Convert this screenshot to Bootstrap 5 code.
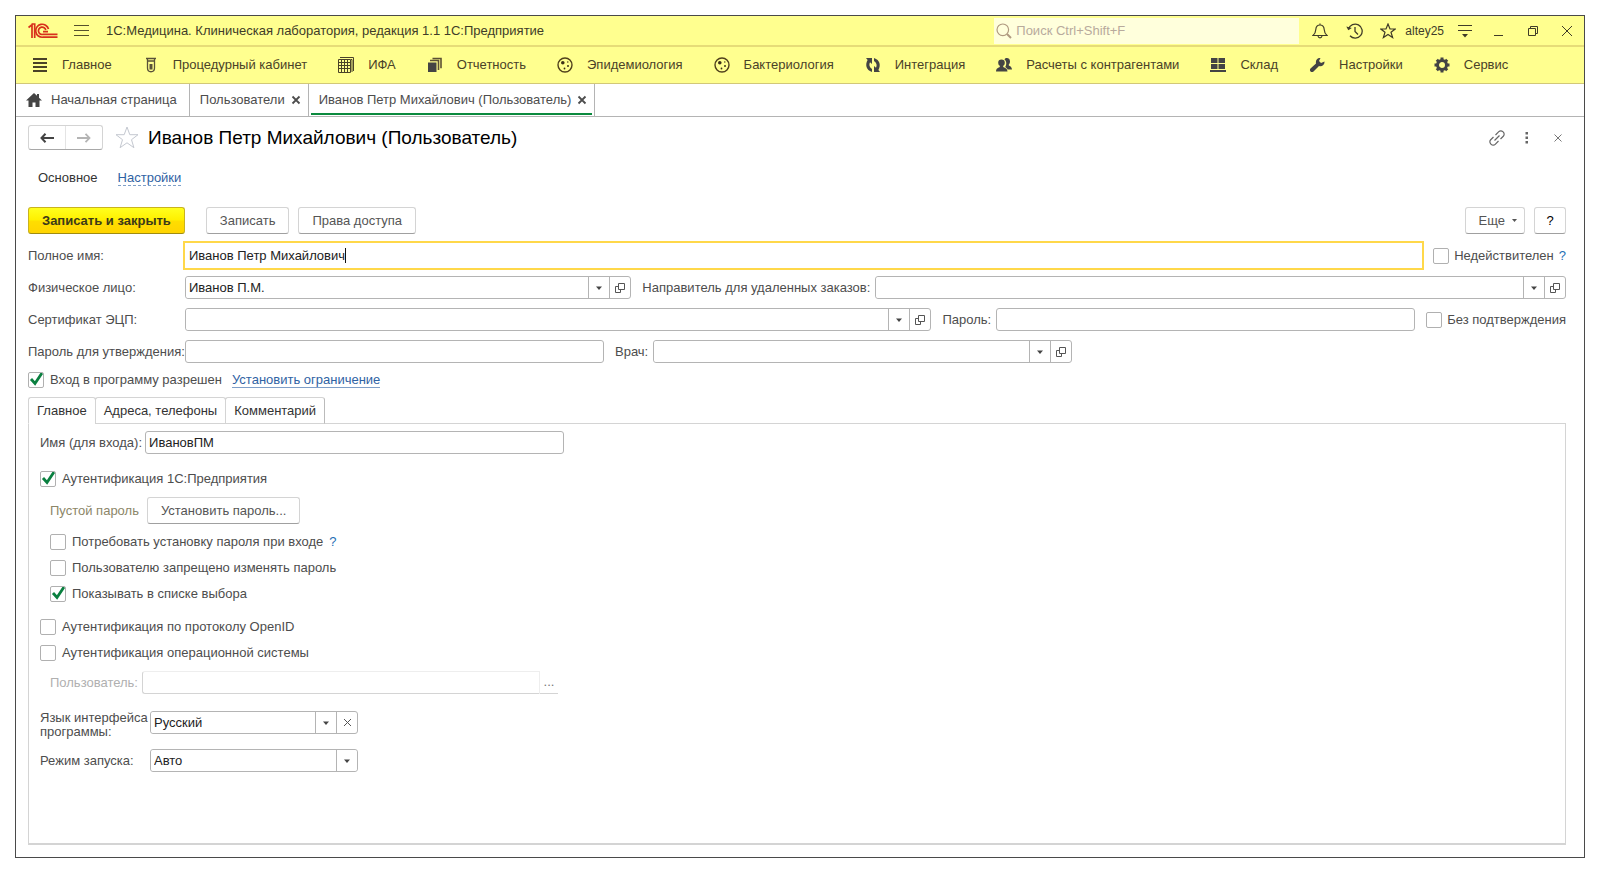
<!DOCTYPE html>
<html lang="ru">
<head>
<meta charset="utf-8">
<meta name="viewport" content="width=device-width, initial-scale=1">
<title>Иванов Петр Михайлович (Пользователь)</title>
<link href="https://cdn.jsdelivr.net/npm/bootstrap@5.3.0/dist/css/bootstrap.min.css" rel="stylesheet">
<style>
  :root { --line: #b4b4b4; --soft: #d4d4d4; --ink: #4d4d4d; --bar: #ffff8f; }
  body { font: 13px/16px "Liberation Sans", Arial, sans-serif; color: var(--ink); background: #fff; padding: 15px; }
  svg { display: block; flex: none; }
  .app-window { min-height: calc(100vh - 30px); border: 1px solid #4a4a4a; }
  .title-bar { height: 31px; background: var(--bar); border-bottom: 2px solid #e6dc78; color: #403c28; padding-left: 12px; }
  .app-name { padding-left: 17px; }
  .user-name { font-size: 12px; }
  .search-box { width: 305px; height: 26px; background: #ffffdc; padding-left: 2px; }
  .search-box input { border: 0; background: none; outline: 0; color: #a89a8c; padding: 0; }
  .search-box input::placeholder { color: #b8aa9c; opacity: 1; }
  .bare { border: 0; background: none; padding: 0; color: inherit; display: flex; align-items: center; justify-content: center; }
  .tool { width: 34px; height: 28px; }
  .section-bar { height: 37px; background: var(--bar); border-bottom: 1px solid #d2c878; padding: 0 16px; gap: 31px; }
  .section-bar a { color: #4a4228; text-decoration: none; gap: 14px; white-space: nowrap; }
  .page-tabs { height: 33px; border-bottom: 1px solid var(--line); }
  .page-tab { position: relative; border-right: 1px solid var(--line); padding: 0 7px 0 10px; gap: 6px; white-space: nowrap; }
  .page-tab.start { gap: 9px; padding-right: 12px; }
  .page-tab a { color: var(--ink); text-decoration: none; }
  .page-tab.current::after { content: ""; position: absolute; left: 2px; right: 2px; bottom: 1px; height: 2px; background: #0b8a3e; }
  .form-page { padding: 8px 18px 12px 12px; }
  .nav-pair { width: 75px; height: 25px; border: 1px solid var(--soft); border-bottom-color: #a8a8a8; border-radius: 3px; }
  .nav-pair button { flex: 1; }
  .nav-pair button + button { border-left: 1px solid #e4e4e4; }
  .page-heading { font-size: 19px; line-height: 24px; color: #000; margin: 0; padding-left: 9px; }
  .more { margin: 0 25px 0 20px; }
  .view-links { padding: 0 10px; height: 18px; margin-top: 19px; gap: 20px; }
  .view-links a { color: #333; text-decoration: none; }
  .view-links a.other, .set-limit { color: #2f62a3; text-decoration: none; border-bottom: 1px dashed #7f9fc8; line-height: 15px; }
  .set-limit { border-bottom-style: solid; }
  .commands { margin: 20px 0 10px; gap: 9px; }
  .cmd { height: 27px; padding: 0 13px; font-size: 13px; line-height: 16px; color: #555; background: #fff; border: 1px solid var(--soft); border-bottom-color: #a0a0a0; border-radius: 3px; white-space: nowrap; }
  .cmd.main { color: #3c3a18; font-weight: bold; margin-right: 12px; border-color: #c9b31e; border-bottom-color: #a08c10; background: linear-gradient(#ffff1e 0, #fff000 48%, #ffde00 52%, #ffd400 100%); }
  .cmd.more-menu { padding-right: 7px; gap: 7px; }
  .cmd.help { width: 32px; padding: 0; color: #000; }
  .field-row { display: flex; align-items: center; height: 23px; margin-bottom: 9px; gap: 11px; }
  .field-row > .pair { display: flex; align-items: center; gap: 5px; }
  .first-label { width: 157px; flex: none; margin-right: -11px; }
  .field-row.tight { gap: 9px; }
  .tight .first-label { margin-right: -9px; }
  label, .hint { white-space: nowrap; }
  .box { height: 23px; width: 419px; border: 1px solid var(--line); border-radius: 3px; padding: 0 3px; font-size: 13px; color: #222; background: #fff; outline: 0; }
  .combo { display: flex; height: 23px; border: 1px solid var(--line); border-radius: 3px; min-width: 0; }
  .combo select { appearance: none; border: 0; outline: 0; flex: 1; min-width: 0; padding: 0 24px 0 3px; font-size: 13px; color: #222; border-radius: 3px;
    background: url("data:image/svg+xml,%3Csvg xmlns='http://www.w3.org/2000/svg' width='21' height='21'%3E%3Cpath d='M.5 0v21' stroke='%23b4b4b4'/%3E%3Cpath d='M8 9.500h6l-3 3.500z' fill='%23444'/%3E%3C/svg%3E") right center no-repeat #fff; }
  .combo button { width: 21px; border-left: 1px solid var(--line); flex: none; }
  .grow-person { flex: 445 1 0; }
  .grow-sender { flex: 925 1 0; }
  .combo.wide { width: 419px; }
  .combo.short { width: 208px; }
  .focus-field { position: relative; flex: 1; height: 29px; margin-left: -2px; }
  .focus-field input { width: 100%; height: 100%; border: 2px solid #ffd84a; border-radius: 0; padding-left: 4px; }
  .caret { position: absolute; left: 162px; top: 7px; width: 1px; height: 15px; background: #111; }
  .tick { appearance: none; width: 16px; height: 16px; border: 1px solid #b0b0b0; border-radius: 2px; background: #fff; margin: 0; flex: none; }
  .tick:checked { background: url("data:image/svg+xml,%3Csvg xmlns='http://www.w3.org/2000/svg' width='14' height='14'%3E%3Cpath d='M2 6l4 4.500L13 0' fill='none' stroke='%230a8040' stroke-width='2.800'/%3E%3C/svg%3E") center no-repeat #fff; }
  .check { display: flex; align-items: center; gap: 6px; height: 16px; }
  .field-row .check { gap: 5px; }
  .hint { color: #1f6fb5; text-decoration: none; }
  .inner-tabs { position: relative; z-index: 1; height: 27px; margin: 9px 0 -1px; }
  .inner-tabs button { border: 1px solid var(--soft); border-right-color: #bbb; background: #fff; color: #333; padding: 0 8px; margin-right: -1px; border-radius: 3px 3px 0 0; }
  .inner-tabs button.current { border-bottom-color: #fff; }
  .panel { display: flex; flex-direction: column; gap: 10px; border: 1px solid var(--soft); border-bottom-width: 2px; padding: 7px 11px; }
  .block { margin-top: 7px; }
  .login-row { gap: 3px; }
  .indent { margin-left: 10px; }
  .empty-note { color: #8c8668; }
  .faded { color: #b0b0b0; }
  .ghost { width: 398px; border-color: #eee; border-left-color: var(--soft); border-bottom-color: var(--soft); border-radius: 3px 0 0 3px; }
  .dots { width: 18px; height: 23px; border-bottom: 1px solid var(--soft); color: #777; }
  .lang-label { width: 110px; line-height: 14px; flex: none; }
</style>
</head>
<body>
<svg width="0" height="0" class="position-absolute" aria-hidden="true">
  <symbol id="open" viewBox="0 0 12 12"><path d="M4.500 1.500h6v6h-6zM4.500 4.500h-3v6h5v-3" fill="none" stroke="#555"/></symbol>
  <symbol id="cross" viewBox="0 0 10 10"><path d="M1.500 1.500l7 7M8.500 1.500l-7 7" fill="none" stroke="currentColor" stroke-width="1.800"/></symbol>
  <symbol id="dish" viewBox="0 0 16 16"><circle cx="8" cy="8" r="7" fill="none" stroke="#50401c" stroke-width="1.400"/><circle cx="5.800" cy="5.800" r="1.800" fill="#3c3018"/><circle cx="10.800" cy="5" r=".7" fill="#3c3018"/><circle cx="7.500" cy="11.500" r=".9" fill="#3c3018"/><circle cx="11" cy="9" r="1" fill="#3c3018"/></symbol>
</svg>

<div class="app-window d-flex flex-column">
  <header class="title-bar d-flex align-items-center">
    <svg width="30" height="16" viewBox="0 0 30 16" fill="none" stroke="#d8301c" stroke-width="1.700"><path d="M0.500 4.500L4 1.800V15M3.500 1h3.200v14"/><path d="M20.500 6A6.500 6.500 0 1 0 15 14.200H29.500M17.800 7A3.700 3.700 0 1 0 15 11.400H29.500M15 8.700H20"/></svg>
    <button class="bare ms-3" type="button" aria-label="Меню"><svg width="15" height="13" viewBox="0 0 15 13" stroke="#55502c"><path d="M0 1.500h15M0 6.500h15M0 11.500h15"/></svg></button>
    <span class="app-name text-nowrap flex-grow-1">1С:Медицина. Клиническая лаборатория, редакция 1.1 1С:Предприятие</span>
    <div class="search-box d-flex align-items-center gap-1">
      <svg width="16" height="16" viewBox="0 0 16 16" fill="none" stroke="#b09a80" stroke-width="1.200"><circle cx="6.800" cy="6.800" r="5.800"/><path d="M11 11l4 4" stroke-width="2"/></svg>
      <input type="search" class="flex-grow-1" placeholder="Поиск Ctrl+Shift+F" aria-label="Поиск">
    </div>
    <button class="bare tool ms-1" type="button" aria-label="Уведомления"><svg width="16" height="16" viewBox="0 0 16 16" fill="none" stroke="#403c28" stroke-width="1.200"><path d="M1 12.500c2-1.500 2.600-3 2.800-6C4 3.500 5.500 2 8 2s4 1.500 4.200 4.500c.2 3 .8 4.500 2.800 6zM6 13c.5 2.500 3.500 2.500 4 0M8 2V.5"/></svg></button>
    <button class="bare tool" type="button" aria-label="История"><svg width="17" height="16" viewBox="0 0 17 16" fill="none" stroke="#403c28" stroke-width="1.300"><path d="M2.500 6A7 7 0 1 1 4 12.800M9 4v4.500l3 3"/><path d="M.3 3.500l2 3.800L5.800 5z" fill="#403c28" stroke="none"/></svg></button>
    <button class="bare tool" type="button" aria-label="Избранное"><svg width="16" height="16" viewBox="0 0 16 16" fill="none" stroke="#403c28" stroke-width="1.200"><path d="M8 1l2 5h5.200l-4.200 3.300 1.600 5.200L8 11.400l-4.600 3.100L5 9.300.8 6H6z"/></svg></button>
    <a href="#" class="user-name text-reset text-decoration-none">altey25</a>
    <button class="bare tool ms-1" type="button" aria-label="Настройки окна"><svg width="14" height="14" viewBox="0 0 14 14"><path d="M0 1.500h14M0 6.500h14" stroke="#403c28" stroke-width="1.200"/><path d="M4 10h6l-3 3.500z" fill="#403c28"/></svg></button>
    <button class="bare tool" type="button" aria-label="Свернуть"><svg width="10" height="12" viewBox="0 0 10 12" stroke="#403c28"><path d="M0 10.500h9"/></svg></button>
    <button class="bare tool" type="button" aria-label="Развернуть"><svg width="10" height="10" viewBox="0 0 10 10" fill="none" stroke="#403c28"><path d="M.5 2.500h7v7h-7zM2.500 2.500v-2h7v7h-2"/></svg></button>
    <button class="bare tool" type="button" aria-label="Закрыть"><svg width="12" height="12" viewBox="0 0 12 12" stroke="#403c28"><path d="M1 1l10 10M11 1L1 11"/></svg></button>
  </header>

  <nav class="section-bar d-flex align-items-center">
    <a href="#" class="d-flex align-items-center"><svg width="16" height="16" viewBox="0 0 16 16" stroke="#4a4228" stroke-width="2"><path d="M1 2h14M1 6h14M1 10h14M1 14h14"/></svg>Главное</a>
    <a href="#" class="d-flex align-items-center"><svg width="16" height="16" viewBox="0 0 16 16"><path d="M3 1.500h10M4.500 2v9c0 5 7 5 7 0V2M5 4h6" fill="none" stroke="#5a5238" stroke-width="1.300"/><path d="M6.500 7h3v5.500h-3z" fill="#5a5238"/></svg>Процедурный кабинет</a>
    <a href="#" class="d-flex align-items-center"><svg width="16" height="16" viewBox="0 0 16 16" fill="none" stroke="#4a4228"><path d="M.5 2.500h12v13H.5zM0 5.500h13M0 8.500h13M0 11.500h13M3.500 2v13M6.500 2v13M9.500 2v13M2 .5h13.500V14M13 2.500h1V15"/></svg>ИФА</a>
    <a href="#" class="d-flex align-items-center"><svg width="16" height="16" viewBox="0 0 16 16"><path d="M1 5.500h8.500V15H1z" fill="#444"/><path d="M3 3.500h8.500V13M5.500 1.500H14v9.800" fill="none" stroke="#5c5034" stroke-width="1.600"/></svg>Отчетность</a>
    <a href="#" class="d-flex align-items-center"><svg width="16" height="16"><use href="#dish"/></svg>Эпидемиология</a>
    <a href="#" class="d-flex align-items-center"><svg width="16" height="16"><use href="#dish"/></svg>Бактериология</a>
    <a href="#" class="d-flex align-items-center"><svg width="16" height="16" viewBox="0 0 16 16" fill="#444"><path d="M1 1h6v6L5 5.200C3.800 7.500 4.200 10 7 12v3C1 13 0 7.500 2.600 3zM15 15H9V9l2 1.800c1.200-2.300.8-4.800-2-6.800V1c6 2 7 7.500 4.400 12z"/></svg>Интеграция</a>
    <a href="#" class="d-flex align-items-center"><svg width="16" height="16" viewBox="0 0 16 16" fill="#444"><path d="M8.500 2.500C9.500.3 14 .5 14 4.500c0 1.500-.7 2.500-1.400 3.500.4 1 3 1 3.400 4.500h-4.500c-.5-1.500-1.500-2-2.300-2.500C10.500 8 11 4.500 8.500 2.500z"/><circle cx="5.500" cy="5.800" r="3.300"/><path d="M3.800 8h3.400v2c1 1 4 .6 4.300 4.500H0C.3 10.600 2.800 11 3.800 10z"/></svg>Расчеты с контрагентами</a>
    <a href="#" class="d-flex align-items-center"><svg width="16" height="16" viewBox="0 0 16 16" fill="#444"><path d="M1 1h6.500v5H1zM8.500 1H15v5H8.500zM1 7h6.500v5H1zM8.500 7H15v5H8.500zM0 13h16v2H0z"/></svg>Склад</a>
    <a href="#" class="d-flex align-items-center"><svg width="16" height="16" viewBox="0 0 16 16" fill="#444"><path d="M11.500 1L10 4l2 2 3.500-1.500c.3 3-2.500 5.500-5.500 4.500l-5.500 5.500c-2 1.800-4.800-.8-3-3L7 6.500C6.300 3 8.500.5 11.500 1z"/></svg>Настройки</a>
    <a href="#" class="d-flex align-items-center"><svg width="16" height="16" viewBox="0 0 16 16"><circle cx="8" cy="8" r="4.500" fill="none" stroke="#444" stroke-width="3"/><path d="M8 .5v3M8 12.500v3M.5 8h3M12.500 8h3M2.800 2.800l2 2M11.200 11.200l2 2M13.200 2.800l-2 2M4.800 11.200l-2 2" stroke="#444" stroke-width="3"/></svg>Сервис</a>
  </nav>

  <nav class="page-tabs d-flex">
    <div class="page-tab start d-flex align-items-center"><svg width="16" height="14" viewBox="0 0 16 14" fill="#444"><path d="M8 0L0 7.500h2.500V14h4V9.500h3V14h4V7.500H16L13 4.700V1h-2v1.800z"/></svg><a href="#">Начальная страница</a></div>
    <div class="page-tab d-flex align-items-center"><a href="#">Пользователи</a><button class="bare" type="button" aria-label="Закрыть вкладку"><svg width="10" height="10"><use href="#cross"/></svg></button></div>
    <div class="page-tab current d-flex align-items-center"><a href="#">Иванов Петр Михайлович (Пользователь)</a><button class="bare" type="button" aria-label="Закрыть вкладку"><svg width="10" height="10"><use href="#cross"/></svg></button></div>
  </nav>

  <main class="form-page d-flex flex-column flex-grow-1">
    <div class="d-flex align-items-center">
      <div class="nav-pair d-flex">
        <button class="bare" type="button" aria-label="Назад"><svg width="14" height="10" viewBox="0 0 14 10"><path d="M2 5h12" stroke="#444" stroke-width="2"/><path d="M5.500.8L1.500 5l4 4.200" fill="none" stroke="#444" stroke-width="2"/></svg></button>
        <button class="bare" type="button" aria-label="Вперед"><svg width="14" height="10" viewBox="0 0 14 10"><path d="M0 5h12M8.500.8l4 4.200-4 4.200" fill="none" stroke="#b4b4b4" stroke-width="1.800"/></svg></button>
      </div>
      <button class="bare ms-2 ps-1" type="button" aria-label="В избранное"><svg width="24" height="23" viewBox="0 0 24 23" fill="none" stroke="#c4c8d0"><path d="M12 1l2.800 7.700H23l-6.500 5 2.400 8L12 16.800l-6.900 4.900 2.400-8L1 8.700h8.200z"/></svg></button>
      <h1 class="page-heading flex-grow-1">Иванов Петр Михайлович (Пользователь)</h1>
      <button class="bare" type="button" aria-label="Ссылка"><svg width="16" height="16" viewBox="0 0 16 16" fill="none" stroke="#666" stroke-width="1.200"><path d="M6.500 5l3.300-3.300a2.800 2.800 0 0 1 4 0l.5.5a2.800 2.800 0 0 1 0 4L11.500 9M9.500 11l-3.300 3.300a2.800 2.800 0 0 1-4 0l-.5-.5a2.800 2.800 0 0 1 0-4L4.500 7M5.500 10.500l5-5"/></svg></button>
      <button class="bare more" type="button" aria-label="Дополнительно"><svg width="4" height="12" viewBox="0 0 4 12" fill="#666"><path d="M.5 0h2.500v2.500H.5zM.5 4.500h2.500V7H.5zM.5 9h2.500v2.500H.5z"/></svg></button>
      <button class="bare me-1" type="button" aria-label="Закрыть"><svg width="8" height="8" viewBox="0 0 8 8" stroke="#777"><path d="M.5.5l7 7M7.500.5l-7 7"/></svg></button>
    </div>

    <div class="view-links d-flex align-items-center"><a href="#">Основное</a><a href="#" class="other">Настройки</a></div>

    <div class="commands d-flex">
      <button type="button" class="cmd main">Записать и закрыть</button>
      <button type="button" class="cmd">Записать</button>
      <button type="button" class="cmd">Права доступа</button>
      <button type="button" class="cmd more-menu ms-auto d-flex align-items-center">Еще <svg width="5" height="3" viewBox="0 0 5 3"><path d="M0 0h5L2.500 3z" fill="#555"/></svg></button>
      <button type="button" class="cmd help">?</button>
    </div>

    <div class="field-row tight">
      <label for="fullName" class="first-label">Полное имя:</label>
      <div class="focus-field"><input id="fullName" class="box" value="Иванов Петр Михайлович"><span class="caret"></span></div>
      <div class="check"><input type="checkbox" class="tick" id="invalid"><label for="invalid">Недействителен</label><a href="#" class="hint">?</a></div>
    </div>
    <div class="field-row">
      <label for="person" class="first-label">Физическое лицо:</label>
      <div class="combo grow-person"><select id="person"><option>Иванов П.М.</option></select><button class="bare" type="button" aria-label="Открыть"><svg width="12" height="12"><use href="#open"/></svg></button></div>
      <div class="pair grow-sender"><label for="sender">Направитель для удаленных заказов:</label>
      <div class="combo flex-grow-1"><select id="sender"><option></option></select><button class="bare" type="button" aria-label="Открыть"><svg width="12" height="12"><use href="#open"/></svg></button></div></div>
    </div>
    <div class="field-row">
      <label for="cert" class="first-label">Сертификат ЭЦП:</label>
      <div class="combo flex-grow-1"><select id="cert"><option></option></select><button class="bare" type="button" aria-label="Открыть"><svg width="12" height="12"><use href="#open"/></svg></button></div>
      <div class="pair"><label for="pass">Пароль:</label><input id="pass" class="box" type="password"></div>
      <div class="check"><input type="checkbox" class="tick" id="noConfirm"><label for="noConfirm">Без подтверждения</label></div>
    </div>
    <div class="field-row">
      <label for="approve" class="first-label">Пароль для утверждения:</label>
      <input id="approve" class="box" type="password">
      <div class="pair"><label for="doctor">Врач:</label>
      <div class="combo wide"><select id="doctor"><option></option></select><button class="bare" type="button" aria-label="Открыть"><svg width="12" height="12"><use href="#open"/></svg></button></div></div>
    </div>
    <div class="check"><input type="checkbox" class="tick" id="allowed" checked><label for="allowed">Вход в программу разрешен</label><a href="#" class="set-limit ms-1">Установить ограничение</a></div>

    <div class="inner-tabs d-flex">
      <button type="button" class="current">Главное</button><button type="button">Адреса, телефоны</button><button type="button">Комментарий</button>
    </div>
    <section class="panel flex-grow-1">
      <div class="login-row d-flex align-items-center"><label for="login">Имя (для входа):</label><input id="login" class="box" value="ИвановПМ"></div>
      <div class="check block"><input type="checkbox" class="tick" id="auth1c" checked><label for="auth1c">Аутентификация 1С:Предприятия</label></div>
      <div class="indent d-flex align-items-center"><span class="empty-note">Пустой пароль</span><button type="button" class="cmd ms-2">Установить пароль...</button></div>
      <div class="indent check"><input type="checkbox" class="tick" id="require"><label for="require">Потребовать установку пароля при входе</label><a href="#" class="hint">?</a></div>
      <div class="indent check"><input type="checkbox" class="tick" id="forbid"><label for="forbid">Пользователю запрещено изменять пароль</label></div>
      <div class="indent check"><input type="checkbox" class="tick" id="show" checked><label for="show">Показывать в списке выбора</label></div>
      <div class="check block"><input type="checkbox" class="tick" id="openid"><label for="openid">Аутентификация по протоколу OpenID</label></div>
      <div class="check"><input type="checkbox" class="tick" id="os"><label for="os">Аутентификация операционной системы</label></div>
      <div class="indent d-flex align-items-center faded"><label for="osUser" class="me-1">Пользователь:</label><input id="osUser" class="box ghost" disabled><button type="button" class="bare dots" aria-label="Выбрать" disabled>...</button></div>
      <div class="block d-flex align-items-start"><label for="lang" class="lang-label">Язык интерфейса<br>программы:</label><div class="combo short"><select id="lang"><option>Русский</option></select><button class="bare" type="button" aria-label="Очистить"><svg width="9" height="9" viewBox="0 0 9 9" stroke="#555"><path d="M1 1l7 7M8 1L1 8"/></svg></button></div></div>
      <div class="d-flex align-items-center"><label for="mode" class="lang-label">Режим запуска:</label><div class="combo short"><select id="mode"><option>Авто</option></select></div></div>
    </section>
  </main>
</div>
<script src="https://cdn.jsdelivr.net/npm/bootstrap@5.3.0/dist/js/bootstrap.bundle.min.js"></script>
</body>
</html>
